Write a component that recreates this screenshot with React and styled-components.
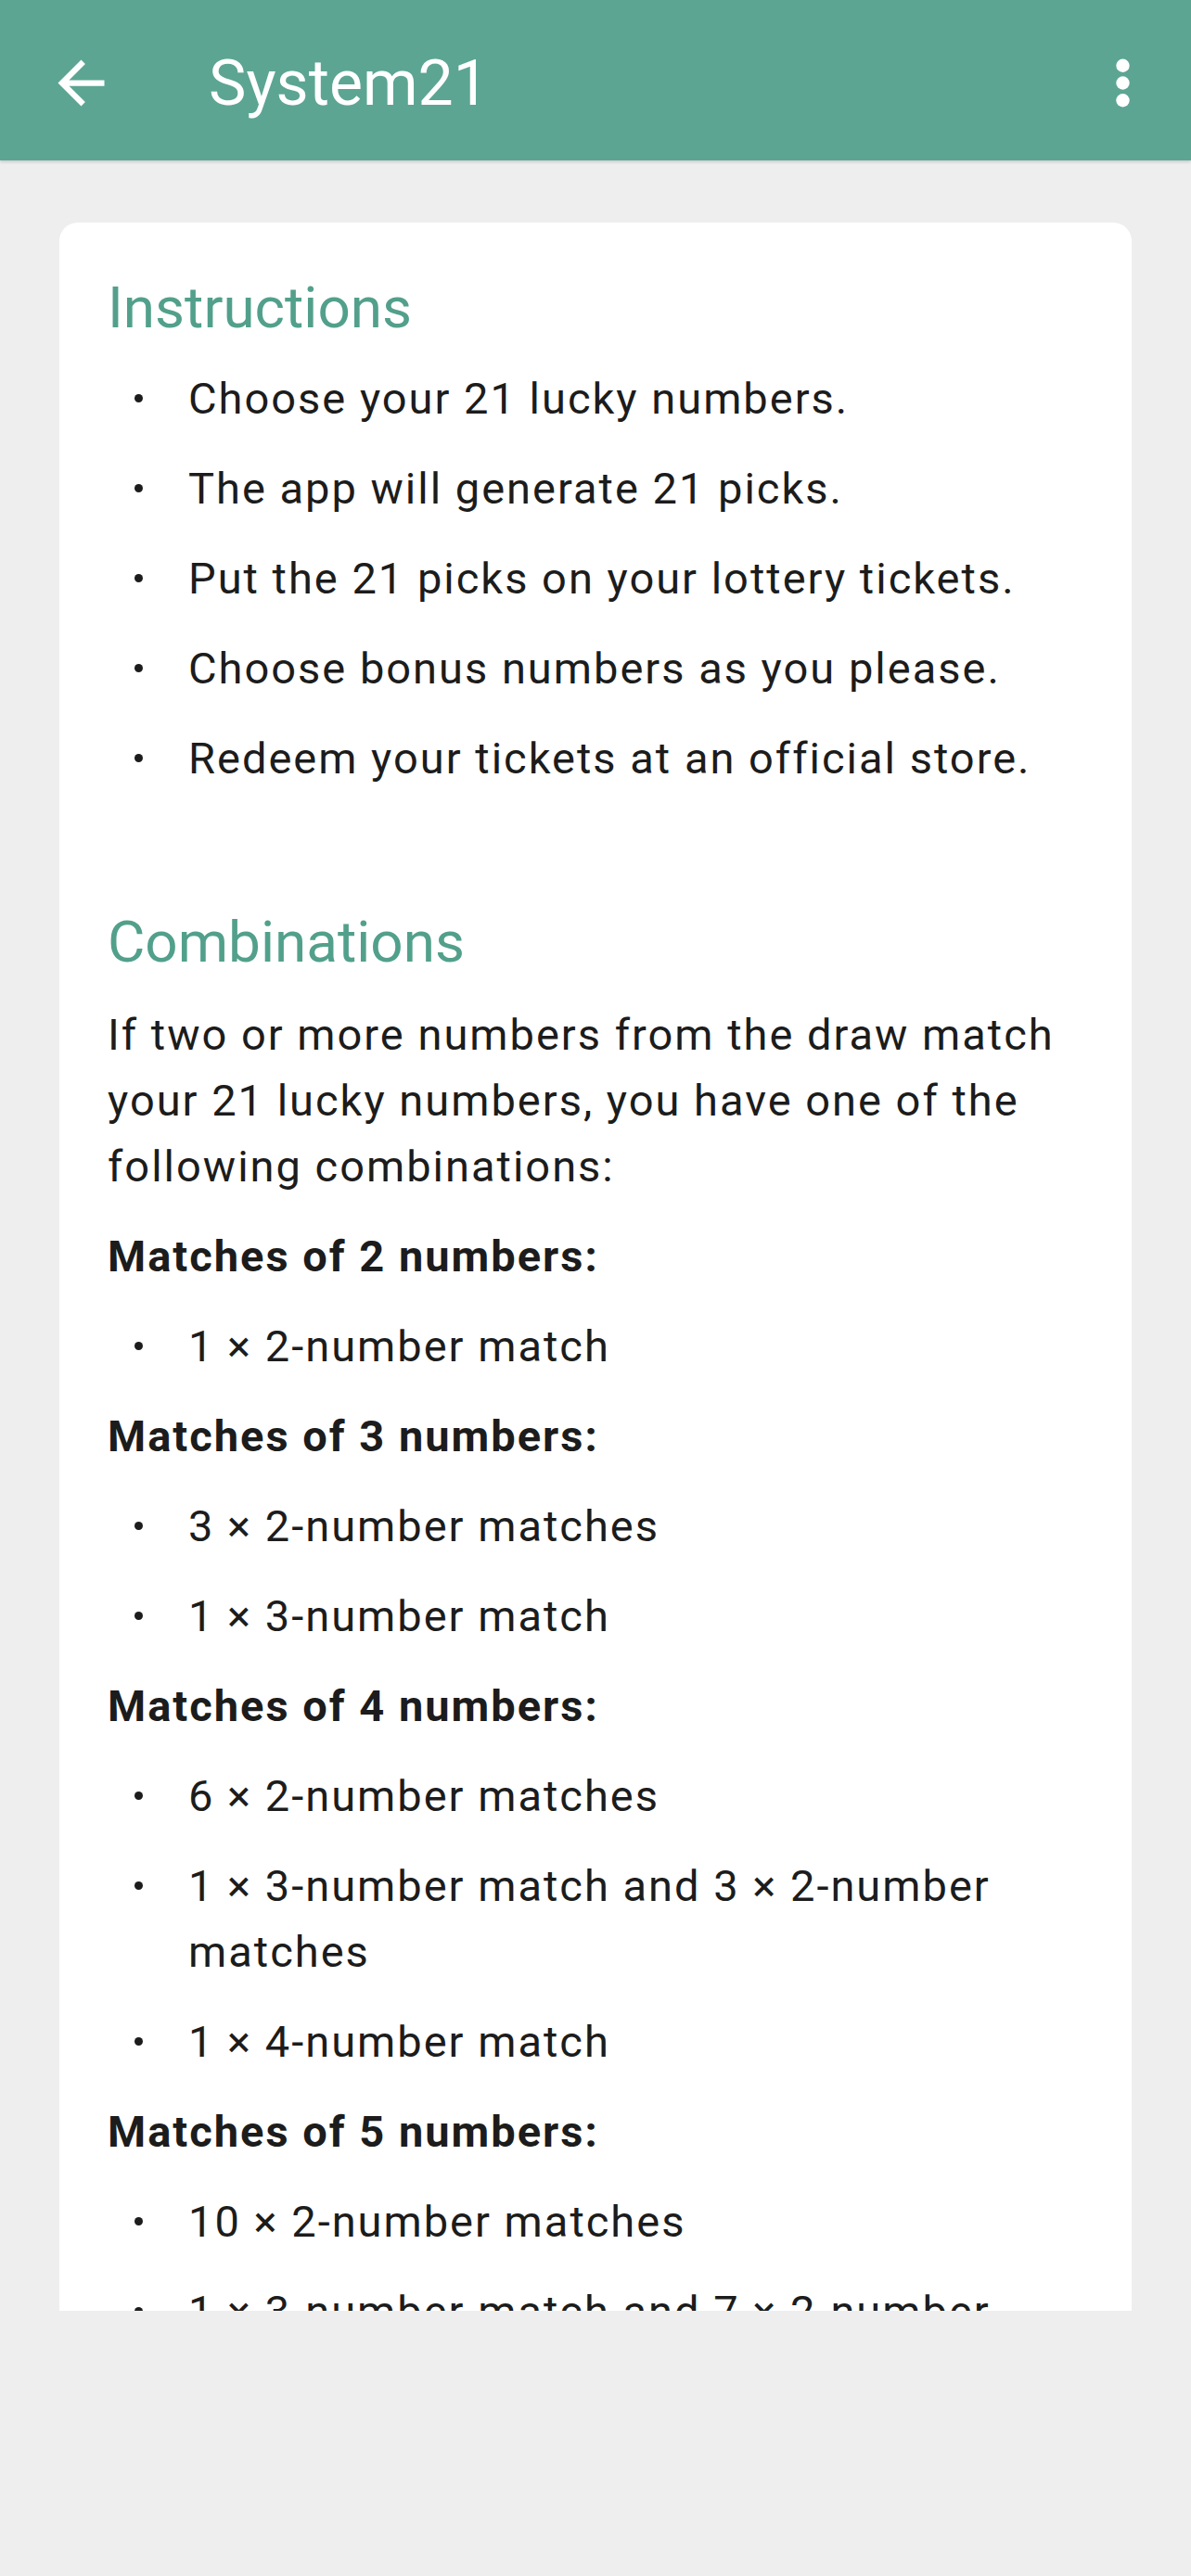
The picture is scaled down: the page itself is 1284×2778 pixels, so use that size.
import React from 'react'
import styled, { createGlobalStyle } from 'styled-components'

const GlobalStyle = createGlobalStyle`
  html, body {
    margin: 0;
    padding: 0;
    background: #eeeeee;
  }
  body {
    font-family: Roboto, "Noto Sans", "Liberation Sans", sans-serif;
    -webkit-font-smoothing: antialiased;
  }
  * {
    box-sizing: border-box;
  }
`

const Screen = styled.div`
  width: 1284px;
  height: 2778px;
  display: flex;
  flex-direction: column;
  background: #eeeeee;
  overflow: hidden;
`

const AppBar = styled.header`
  flex: none;
  height: 173px;
  padding: 6px 36px 0 50px;
  display: flex;
  align-items: center;
  background: #5ca593;
  box-shadow: 0 2px 3px rgba(0, 0, 0, 0.14);
  position: relative;
  z-index: 1;
`

const IconButton = styled.button`
  width: 75px;
  height: 75px;
  padding: 0;
  border: 0;
  background: none;
  color: #ffffff;
  display: flex;
  align-items: center;
  justify-content: center;

  svg {
    width: 75px;
    height: 75px;
    fill: currentColor;
  }
`

const Title = styled.h1`
  flex: 1;
  margin: 0 0 0 100px;
  font-size: 68px;
  font-weight: 400;
  color: #ffffff;
  line-height: 1;
`

const Scroll = styled.main`
  flex: none;
  height: 2319px;
  overflow: hidden;
  padding: 67px 64px 0;
`

const Card = styled.article`
  background: #ffffff;
  border-radius: 20px;
  padding: 54px 52px 60px;
  color: #1c1c1c;
  font-size: 47px;
  line-height: 71px;
  letter-spacing: 2px;
`

const Heading = styled.h2`
  margin: ${(p) => (p.$spaced ? '125px' : '0')} 0 0;
  font-size: 62px;
  line-height: 76px;
  font-weight: 400;
  letter-spacing: 0;
  color: #52a08b;
`

const Para = styled.p`
  margin: 26px 0 0;
`

const GroupTitle = styled.p`
  margin: 26px 0 0;
  font-weight: 700;
`

const List = styled.ul`
  margin: 0;
  padding: 0;
  list-style: none;
`

const Item = styled.li`
  margin-top: 26px;
  display: grid;
  grid-template-columns: 87px 1fr;
  align-items: start;

  ${Heading} + ${List} &:first-child {
    margin-top: 24px;
  }
`

const Bullet = styled.span`
  width: 9px;
  height: 9px;
  margin: 31px 0 0 29px;
  border-radius: 50%;
  background: #1c1c1c;
`

const ArrowBack = () => (
  <svg viewBox="0 0 24 24" aria-hidden="true">
    <path d="M20 11H7.83l5.59-5.59L12 4l-8 8 8 8 1.41-1.41L7.83 13H20v-2z" />
  </svg>
)

const MoreVert = () => (
  <svg viewBox="0 0 24 24" aria-hidden="true">
    <circle cx="12" cy="6" r="2.3" />
    <circle cx="12" cy="12" r="2.3" />
    <circle cx="12" cy="18" r="2.3" />
  </svg>
)

const instructions = [
  'Choose your 21 lucky numbers.',
  'The app will generate 21 picks.',
  'Put the 21 picks on your lottery tickets.',
  'Choose bonus numbers as you please.',
  'Redeem your tickets at an official store.',
]

const groups = [
  { n: 2, items: ['1 × 2-number match'] },
  { n: 3, items: ['3 × 2-number matches', '1 × 3-number match'] },
  {
    n: 4,
    items: [
      '6 × 2-number matches',
      '1 × 3-number match and 3 × 2-number matches',
      '1 × 4-number match',
    ],
  },
  {
    n: 5,
    items: [
      '10 × 2-number matches',
      '1 × 3-number match and 7 × 2-number matches',
      '2 × 3-number matches and 4 × 2-number matches',
      '1 × 4-number match and 6 × 2-number matches',
      '1 × 5-number match',
    ],
  },
]

const Bullets = ({ items }) => (
  <List>
    {items.map((text) => (
      <Item key={text}>
        <Bullet />
        <span>{text}</span>
      </Item>
    ))}
  </List>
)

export default function App() {
  return (
    <>
      <GlobalStyle />
      <Screen>
        <AppBar>
          <IconButton aria-label="Back">
            <ArrowBack />
          </IconButton>
          <Title>System21</Title>
          <IconButton aria-label="More options">
            <MoreVert />
          </IconButton>
        </AppBar>
        <Scroll>
          <Card>
            <Heading>Instructions</Heading>
            <Bullets items={instructions} />

            <Heading $spaced>Combinations</Heading>
            <Para>
              If two or more numbers from the draw match your 21 lucky numbers,
              you have one of the following combinations:
            </Para>
            {groups.map((g) => (
              <React.Fragment key={g.n}>
                <GroupTitle>Matches of {g.n} numbers:</GroupTitle>
                <Bullets items={g.items} />
              </React.Fragment>
            ))}
          </Card>
        </Scroll>
      </Screen>
    </>
  )
}
